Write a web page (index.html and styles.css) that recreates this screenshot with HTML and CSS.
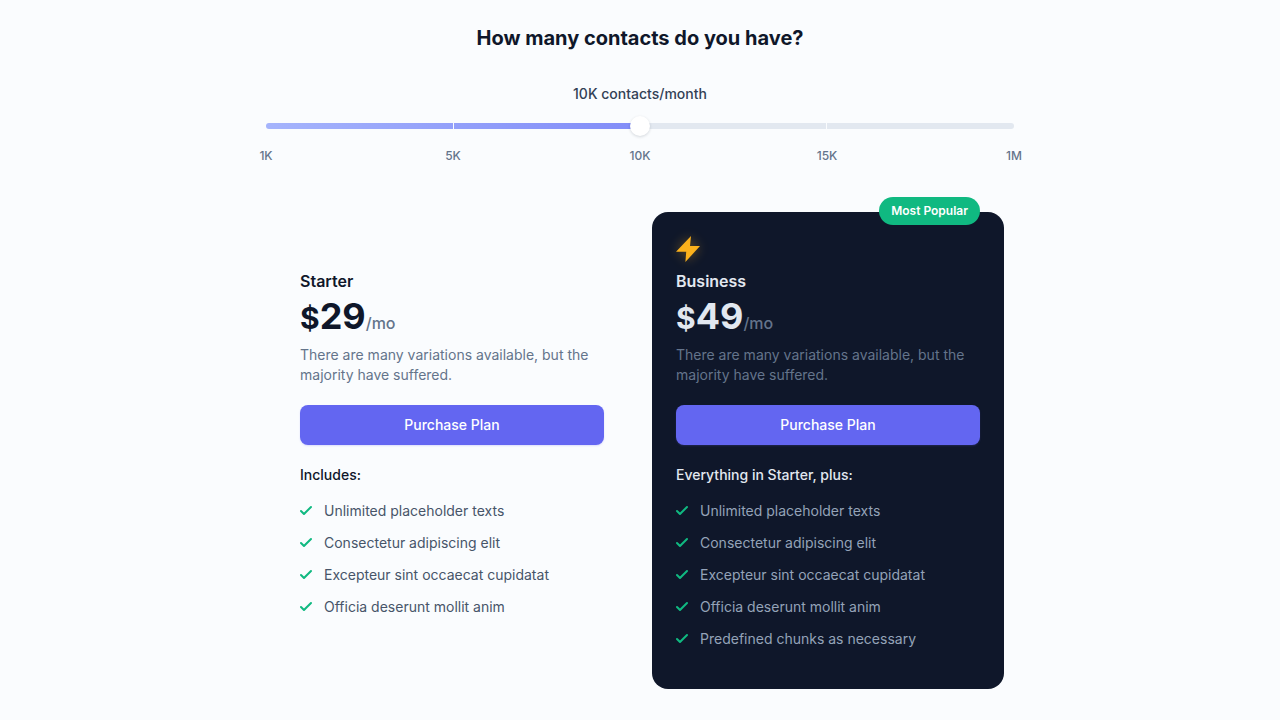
FILE: index.html
```html
<!DOCTYPE html>
<html lang="en">
<head>
  <meta charset="UTF-8">
  <meta name="viewport" content="width=device-width, initial-scale=1">
  <title>Pricing</title>
  <link rel="stylesheet" href="styles.css">
</head>
<body>
  <svg width="0" height="0" class="sprite" aria-hidden="true">
    <symbol id="check" viewBox="0 0 12 12">
      <path d="M10.28 1.28L3.989 7.575 1.695 5.28A1 1 0 00.28 6.695l3 3a1 1 0 001.414 0l7-7A1 1 0 0010.28 1.28z" />
    </symbol>
  </svg>

  <main class="pricing">
    <h1>How many contacts do you have?</h1>

    <div class="range">
      <label for="contacts"><span id="contactsValue">10K</span> contacts/month</label>
      <div class="slider">
        <input type="range" id="contacts" min="0" max="4" step="1" value="2">
      </div>
      <div class="scale" aria-hidden="true">
        <span>1K</span>
        <span>5K</span>
        <span>10K</span>
        <span>15K</span>
        <span>1M</span>
      </div>
    </div>

    <div class="plans">
      <section class="plan">
        <div class="plan-icon"></div>
        <h2>Starter</h2>
        <div class="price"><span class="currency">$</span><span class="amount">29</span><span class="period">/mo</span></div>
        <p class="description">There are many variations available, but the majority have suffered.</p>
        <button type="button">Purchase Plan</button>
        <h3>Includes:</h3>
        <ul>
          <li><svg><use href="#check" /></svg>Unlimited placeholder texts</li>
          <li><svg><use href="#check" /></svg>Consectetur adipiscing elit</li>
          <li><svg><use href="#check" /></svg>Excepteur sint occaecat cupidatat</li>
          <li><svg><use href="#check" /></svg>Officia deserunt mollit anim</li>
        </ul>
      </section>

      <section class="plan plan-dark">
        <div class="badge">Most Popular</div>
        <div class="plan-icon">
          <svg class="bolt" viewBox="0 0 24 26" aria-hidden="true">
            <path d="M15 0L0 15.8h10.2L9.4 26 24 10H14z" />
          </svg>
        </div>
        <h2>Business</h2>
        <div class="price"><span class="currency">$</span><span class="amount">49</span><span class="period">/mo</span></div>
        <p class="description">There are many variations available, but the majority have suffered.</p>
        <button type="button">Purchase Plan</button>
        <h3>Everything in Starter, plus:</h3>
        <ul>
          <li><svg><use href="#check" /></svg>Unlimited placeholder texts</li>
          <li><svg><use href="#check" /></svg>Consectetur adipiscing elit</li>
          <li><svg><use href="#check" /></svg>Excepteur sint occaecat cupidatat</li>
          <li><svg><use href="#check" /></svg>Officia deserunt mollit anim</li>
          <li><svg><use href="#check" /></svg>Predefined chunks as necessary</li>
        </ul>
      </section>
    </div>
  </main>

  <script>
    const steps = ['1K', '5K', '10K', '15K', '1M'];
    const slider = document.getElementById('contacts');

    function updateSlider() {
      document.getElementById('contactsValue').textContent = steps[slider.value];
      slider.parentElement.style.setProperty('--fill', slider.value * 25 + '%');
    }

    slider.addEventListener('input', updateSlider);
    updateSlider();
  </script>
</body>
</html>
```
FILE: styles.css
```css
:root {
  --bg: #fafcfe;
  --dark: #0f172a;
  --text: #475569;
  --muted: #64748b;
  --line: #e2e8f0;
  --primary: #6366f1;
  --green: #10b981;
}

* {
  box-sizing: border-box;
}

body {
  margin: 0;
  background: var(--bg);
  color: var(--text);
  font-family: Inter, sans-serif;
  font-size: 14px;
  line-height: 20px;
}

h1, h2, h3, p, ul {
  margin: 0;
}

.sprite {
  position: absolute;
}

.pricing {
  max-width: 796px;
  margin: 0 auto;
  padding: 24px 24px 31px;
}

h1 {
  color: var(--dark);
  font-size: 20px;
  font-weight: 700;
  line-height: 28px;
  text-align: center;
}

.range {
  margin-top: 32px;
}

.range label {
  display: block;
  color: #334155;
  font-weight: 500;
  text-align: center;
}

.slider {
  --fill: 50%;
  position: relative;
  height: 20px;
  margin-top: 12px;
}

/* tick marks over the track */
.slider::before {
  content: "";
  position: absolute;
  inset: 7px 0;
  background:
    linear-gradient(var(--bg), var(--bg)) 25% 0 / 1px 100% no-repeat,
    linear-gradient(var(--bg), var(--bg)) 75% 0 / 1px 100% no-repeat;
  pointer-events: none;
}

.slider input {
  appearance: none;
  display: block;
  width: 100%;
  height: 20px;
  margin: 0;
  background: none;
  cursor: pointer;
}

.slider input::-webkit-slider-runnable-track {
  height: 6px;
  border-radius: 3px;
  background:
    linear-gradient(90deg, #a5b4fc, #818cf8) 0 0 / var(--fill) 100% no-repeat,
    var(--line);
}

.slider input::-webkit-slider-thumb {
  appearance: none;
  width: 20px;
  height: 20px;
  margin-top: -7px;
  border-radius: 50%;
  background: #fff;
  box-shadow: 0 1px 3px rgba(15, 23, 42, 0.16);
}

.scale {
  display: flex;
  justify-content: space-between;
  margin-top: 10px;
  color: var(--muted);
  font-size: 12px;
  font-weight: 500;
}

/* zero-width items keep each label centred on its tick */
.scale span {
  display: flex;
  justify-content: center;
  width: 0;
}

.plans {
  display: grid;
  grid-template-columns: 1fr 1fr;
  gap: 24px;
  margin: 46px 10px 0;
}

.plan {
  position: relative;
  padding: 24px 24px 40px;
  border-radius: 16px;
}

.plan-icon {
  height: 32px;
}

.bolt {
  display: block;
  width: 24px;
  height: 26px;
  fill: #fbb11c;
  filter: drop-shadow(0 0 6px rgba(251, 177, 28, 0.4));
}

.plan h2 {
  color: var(--dark);
  font-size: 16px;
  font-weight: 600;
  line-height: 26px;
}

.price {
  display: flex;
  align-items: baseline;
  color: var(--dark);
  font-weight: 700;
  line-height: 44px;
}

.currency {
  font-size: 30px;
}

.amount {
  font-size: 36px;
}

.period {
  color: var(--muted);
  font-size: 16px;
  font-weight: 500;
}

.description {
  color: var(--muted);
}

.plan button {
  display: block;
  width: 100%;
  height: 40px;
  margin: 20px 0;
  border: none;
  border-radius: 8px;
  background: var(--primary);
  color: #fff;
  font: inherit;
  font-weight: 500;
  box-shadow: 0 1px 2px rgba(99, 102, 241, 0.2);
  cursor: pointer;
}

.plan button:hover {
  background: #4f46e5;
}

.plan h3 {
  color: var(--dark);
  font-size: 14px;
  font-weight: 500;
}

.plan ul {
  display: flex;
  flex-direction: column;
  gap: 12px;
  margin-top: 16px;
  padding: 0;
  list-style: none;
}

.plan li {
  display: flex;
  align-items: center;
  gap: 12px;
}

.plan li svg {
  width: 12px;
  height: 12px;
  fill: var(--green);
}

.plan-dark {
  background: var(--dark);
}

.plan-dark h2,
.plan-dark .price,
.plan-dark h3 {
  color: var(--line);
}

.plan-dark .period,
.plan-dark .description {
  color: var(--muted);
}

.plan-dark li {
  color: #94a3b8;
}

.badge {
  position: absolute;
  top: -15px;
  right: 24px;
  padding: 4px 12px;
  border-radius: 14px;
  background: var(--green);
  color: #fff;
  font-size: 12px;
  font-weight: 600;
}

@media (max-width: 640px) {
  .plans {
    grid-template-columns: 1fr;
  }
}
```
